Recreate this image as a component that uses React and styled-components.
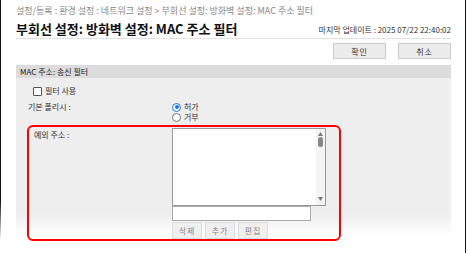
import React from "react";
import styled, { createGlobalStyle } from "styled-components";

const GlobalStyle = createGlobalStyle`
  body {
    margin: 0;
    background: #fff;
    font-family: "Noto Sans CJK KR", "Noto Sans", sans-serif;
  }
`;

const Frame = styled.div`
  position: relative;
  width: 467px;
  height: 253px;
  box-sizing: border-box;
  padding: 0 16px 0 16px;
  background: #fff;
  overflow: hidden;
  &::before {
    content: "";
    position: absolute;
    left: 0;
    top: 0;
    width: 1px;
    height: 253px;
    background: linear-gradient(#111 0, #111 200px, #fff 240px);
  }
  &::after {
    content: "";
    position: absolute;
    right: 1px;
    top: 0;
    width: 1px;
    height: 253px;
    background: #111;
  }
`;

const Breadcrumb = styled.div`
  font-size: 9px;
  color: #888;
  line-height: 12px;
  padding-top: 5px;
  white-space: nowrap;
`;

const TitleRow = styled.div`
  display: flex;
  justify-content: space-between;
  align-items: flex-end;
  height: 21px;
  border-bottom: 1px solid #e2e2e2;
`;

const Title = styled.h1`
  margin: 0;
  font-size: 13px;
  font-weight: bold;
  color: #111;
  line-height: 18px;
  white-space: nowrap;
`;

const Updated = styled.span`
  font-size: 8px;
  color: #333;
  line-height: 12px;
  margin-bottom: 2px;
  white-space: nowrap;
`;

const Actions = styled.div`
  display: flex;
  justify-content: flex-end;
  gap: 12px;
  padding-top: 4px;
  height: 16px;
`;

const ActionButton = styled.button`
  width: 53px;
  height: 16px;
  padding: 0;
  border: 1px solid #ccc;
  background: #ececec;
  font-family: inherit;
  font-size: 8px;
  color: #333;
  letter-spacing: 1px;
`;

const Panel = styled.section`
  margin-top: 6px;
  background: linear-gradient(#eee 0, #eee 148px, #fff 172px);
  height: 180px;
`;

const PanelHeader = styled.div`
  height: 13px;
  background: #dcdcdc;
  font-size: 8px;
  line-height: 13px;
  color: #222;
  padding-left: 4px;
`;

const Row = styled.div`
  display: flex;
  align-items: ${(p) => (p.$top ? "flex-start" : "center")};
  padding-left: ${(p) => p.$indent}px;
  margin-top: ${(p) => p.$mt}px;
`;

const Label = styled.label`
  font-size: 8px;
  color: #333;
  line-height: 10px;
  width: ${(p) => (p.$w ? `${p.$w}px` : "auto")};
  flex: none;
  display: flex;
  align-items: center;
  gap: 3px;
`;

const FieldLabel = styled(Label)`
  align-self: flex-start;
  margin-top: 2px;
`;

const Box = styled.span`
  width: 7px;
  height: 7px;
  border: 1px solid #555;
  border-radius: 1px;
  background: #fff;
  display: inline-block;
`;

const RadioGroup = styled.div`
  display: flex;
  flex-direction: column;
`;

const Radio = styled.span`
  width: 7px;
  height: 7px;
  border-radius: 50%;
  border: 1px solid ${(p) => (p.$on ? "#1a73e8" : "#777")};
  background: #fff;
  display: inline-block;
  position: relative;
  &::after {
    content: "";
    display: ${(p) => (p.$on ? "block" : "none")};
    position: absolute;
    left: 1.5px;
    top: 1.5px;
    width: 4px;
    height: 4px;
    border-radius: 50%;
    background: #1a73e8;
  }
`;

const Highlight = styled.div`
  margin: 3px 0 0 11px;
  width: 314px;
  height: 116px;
  box-sizing: border-box;
  border: 2px solid #f00;
  border-radius: 6px;
  display: flex;
  padding: 1px 0 0 5px;
`;

const Field = styled.div`
  display: flex;
  flex-direction: column;
`;

const ListBox = styled.div`
  width: 152px;
  height: 76px;
  border: 1px solid #999;
  background: #fff;
  display: flex;
  justify-content: flex-end;
`;

const ScrollBar = styled.div`
  width: 9px;
  background: #f4f4f4;
  display: flex;
  flex-direction: column;
  align-items: center;
  justify-content: space-between;
  padding: 3px 0 4px;
  box-sizing: border-box;
`;

const ThumbTrack = styled.div`
  display: flex;
  flex-direction: column;
  align-items: center;
  flex: 1;
`;

const Thumb = styled.div`
  width: 5px;
  height: 10px;
  border-radius: 3px;
  background: #888;
  margin-top: 1px;
`;

const TextInput = styled.div`
  width: 137px;
  height: 13px;
  border: 1px solid #aaa;
  background: #fff;
`;

const SmallButtons = styled.div`
  display: flex;
  gap: 3px;
  margin-top: 1px;
`;

const SmallButton = styled.button`
  width: 30px;
  height: 17px;
  padding: 0;
  border: 1px solid #ddd;
  background: #efefef;
  font-family: inherit;
  font-size: 8px;
  color: #888;
  letter-spacing: 1px;
`;

const Arrow = ({ up }) => (
  <svg width="5" height="4" viewBox="0 0 5 4">
    <path d={up ? "M2.5 0 L5 4 L0 4 Z" : "M0 0 L5 0 L2.5 4 Z"} fill="#777" />
  </svg>
);

export default function App() {
  return (
    <>
      <GlobalStyle />
      <Frame>
        <Breadcrumb>
          설정/등록 : 환경 설정 : 네트워크 설정 &gt; 부회선 설정: 방화벽 설정: MAC 주소 필터
        </Breadcrumb>
        <TitleRow>
          <Title>부회선 설정: 방화벽 설정: MAC 주소 필터</Title>
          <Updated>마지막 업데이트 : 2025 07/22 22:40:02</Updated>
        </TitleRow>
        <Actions>
          <ActionButton>확인</ActionButton>
          <ActionButton>취소</ActionButton>
        </Actions>
        <Panel>
          <PanelHeader>MAC 주소: 송신 필터</PanelHeader>
          <Row $indent={17} $mt={8}>
            <Label>
              <Box />
              필터 사용
            </Label>
          </Row>
          <Row $indent={12} $mt={6} $top>
            <Label $w={144}>기본 폴리시 :</Label>
            <RadioGroup>
              <Label>
                <Radio $on />
                허가
              </Label>
              <Label>
                <Radio />
                거부
              </Label>
            </RadioGroup>
          </Row>
          <Highlight>
            <FieldLabel $w={138}>예외 주소 :</FieldLabel>
            <Field>
              <ListBox>
                <ScrollBar>
                  <ThumbTrack>
                    <Arrow up />
                    <Thumb />
                  </ThumbTrack>
                  <Arrow />
                </ScrollBar>
              </ListBox>
              <TextInput />
              <SmallButtons>
                <SmallButton>삭제</SmallButton>
                <SmallButton>추가</SmallButton>
                <SmallButton>편집</SmallButton>
              </SmallButtons>
            </Field>
          </Highlight>
        </Panel>
      </Frame>
    </>
  );
}
